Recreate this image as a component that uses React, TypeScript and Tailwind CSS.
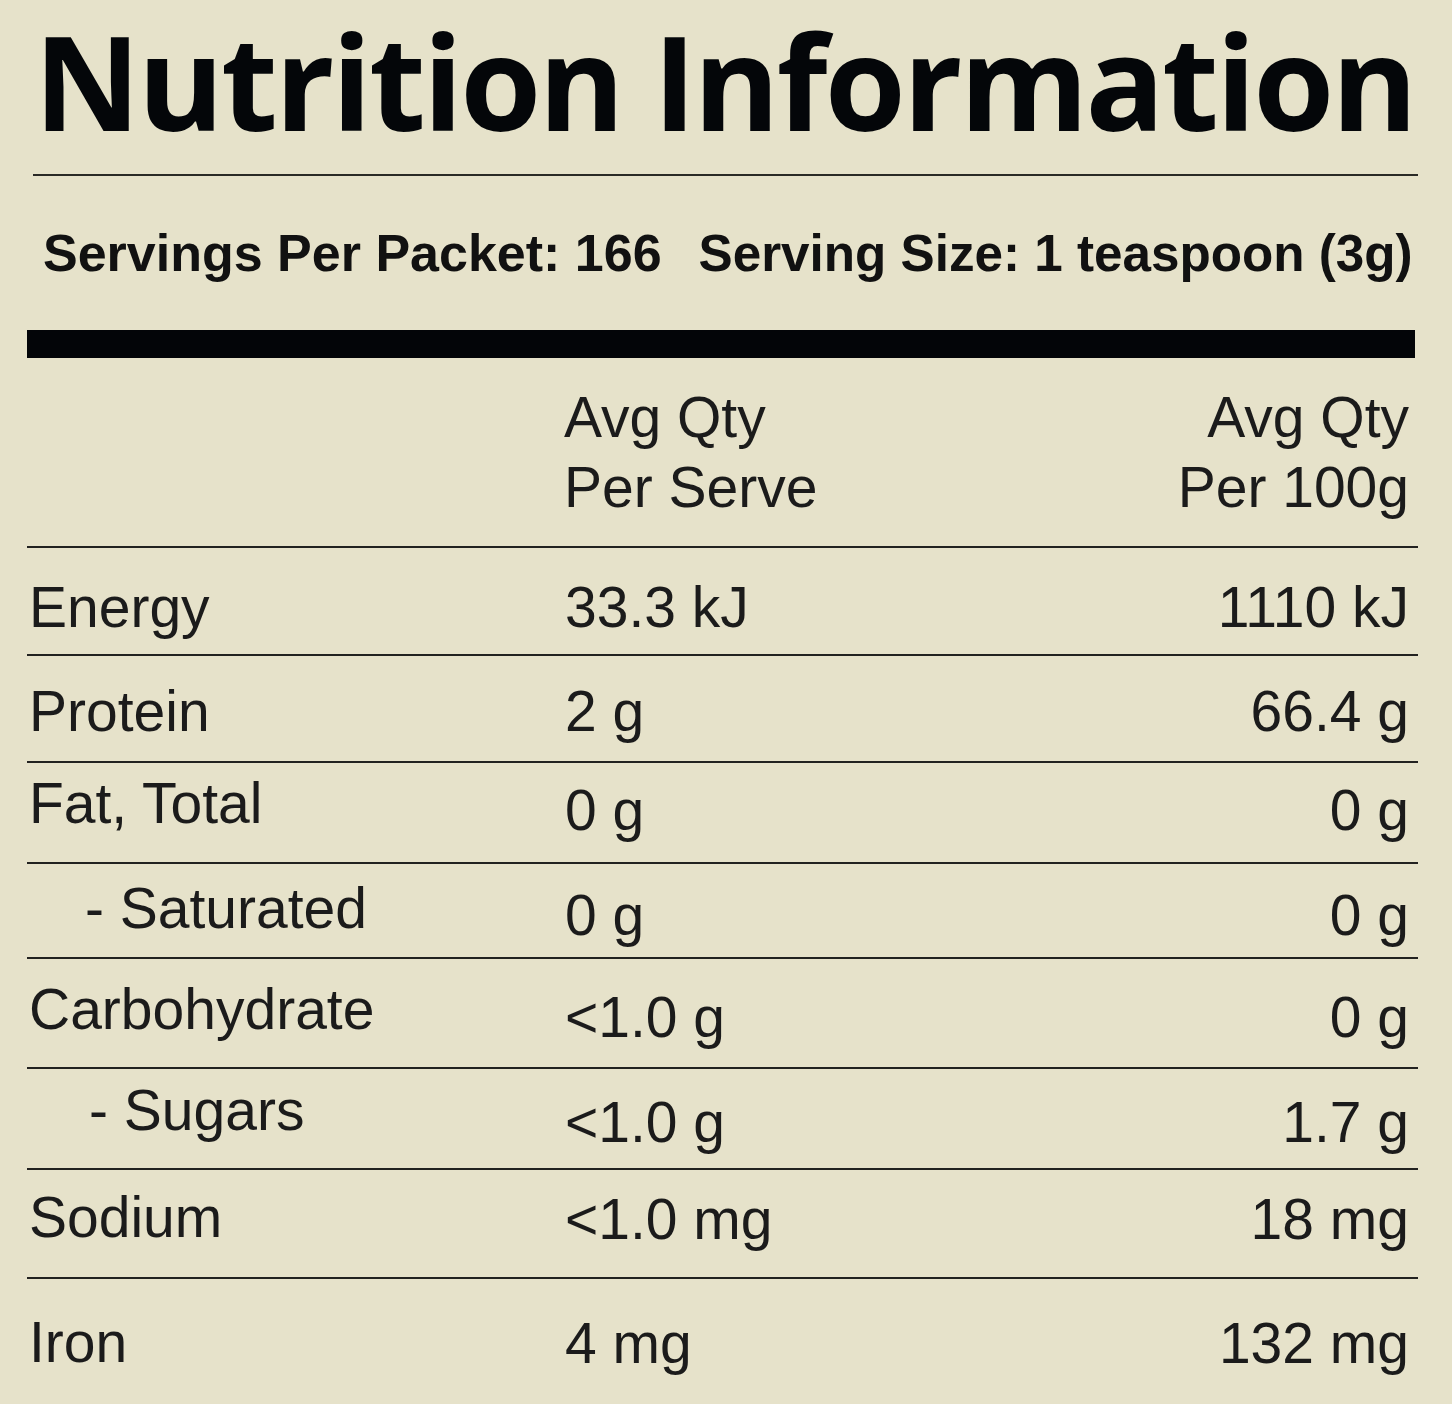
import React from "react";

type Row = {
  label: string;
  indent?: string;
  serve: string;
  per100: string;
  h: string;
  lpt: string;
  vpt: string;
};

const rows: Row[] = [
  { label: "Energy", serve: "33.3 kJ", per100: "1110 kJ", h: "h-[108px]", lpt: "pt-[31px]", vpt: "pt-[31px]" },
  { label: "Protein", serve: "2 g", per100: "66.4 g", h: "h-[107px]", lpt: "pt-[27px]", vpt: "pt-[27px]" },
  { label: "Fat, Total", serve: "0 g", per100: "0 g", h: "h-[101px]", lpt: "pt-[12px]", vpt: "pt-[19px]" },
  { label: "- Saturated", indent: "pl-[58px]", serve: "0 g", per100: "0 g", h: "h-[95px]", lpt: "pt-[16px]", vpt: "pt-[23px]" },
  { label: "Carbohydrate", serve: "<1.0 g", per100: "0 g", h: "h-[110px]", lpt: "pt-[22px]", vpt: "pt-[30px]" },
  { label: "- Sugars", indent: "pl-[62px]", serve: "<1.0 g", per100: "1.7 g", h: "h-[101px]", lpt: "pt-[13px]", vpt: "pt-[25px]" },
  { label: "Sodium", serve: "<1.0 mg", per100: "18 mg", h: "h-[109px]", lpt: "pt-[19px]", vpt: "pt-[21px]" },
  { label: "Iron", serve: "4 mg", per100: "132 mg", h: "h-[125px]", lpt: "pt-[35px]", vpt: "pt-[36px]" },
];

export default function App() {
  return (
    <div className="w-[1452px] min-h-[1404px] bg-[#e6e2ca]">
      {/* Title */}
      <div className="h-[174px] pt-[15px] pl-[34px]">
        <h1
          className="whitespace-nowrap text-[131px] tracking-[-2.8px] leading-none font-bold text-[#040609]"
          style={{ fontFamily: '"Open Sans", "Noto Sans", sans-serif' }}
        >
          Nutrition Information
        </h1>
      </div>
      <div className="ml-[33px] w-[1385px] h-[2px] bg-[#2a2a26]" />

      {/* Servings */}
      <div
        className="h-[154px] pt-[51px] pl-[43px] flex items-baseline gap-[37px] leading-none font-bold text-[#111111] whitespace-nowrap"
        style={{ fontFamily: '"Liberation Sans", Arial, sans-serif' }}
      >
        <span className="text-[52px]">Servings Per Packet: 166</span>
        <span className="text-[51.2px]">Serving Size: 1 teaspoon (3g)</span>
      </div>

      {/* Thick bar */}
      <div className="ml-[27px] w-[1388px] h-[28px] bg-[#030508]" />

      {/* Table */}
      <div
        className="ml-[27px] w-[1391px] text-[57px] text-[#1b1b1b]"
        style={{ fontFamily: '"Liberation Sans", Arial, sans-serif' }}
      >
        <div className="h-[190px] pt-[24px] flex border-b-2 border-[#222220] leading-[70px]">
          <div className="w-[537px]" />
          <div className="flex-1">
            <div>Avg Qty</div>
            <div>Per Serve</div>
          </div>
          <div className="text-right pr-[9px]">
            <div>Avg Qty</div>
            <div>Per 100g</div>
          </div>
        </div>

        {rows.map((r, i) => (
          <div
            key={r.label}
            className={`${r.h} flex leading-none whitespace-nowrap ${
              i < rows.length - 1 ? "border-b-2 border-[#222220]" : ""
            }`}
          >
            <div className={`w-[538px] ${r.lpt} ${r.indent ?? "pl-[2px]"}`}>{r.label}</div>
            <div className={`flex-1 ${r.vpt}`}>{r.serve}</div>
            <div className={`text-right pr-[9px] ${r.vpt}`}>{r.per100}</div>
          </div>
        ))}
      </div>
    </div>
  );
}
